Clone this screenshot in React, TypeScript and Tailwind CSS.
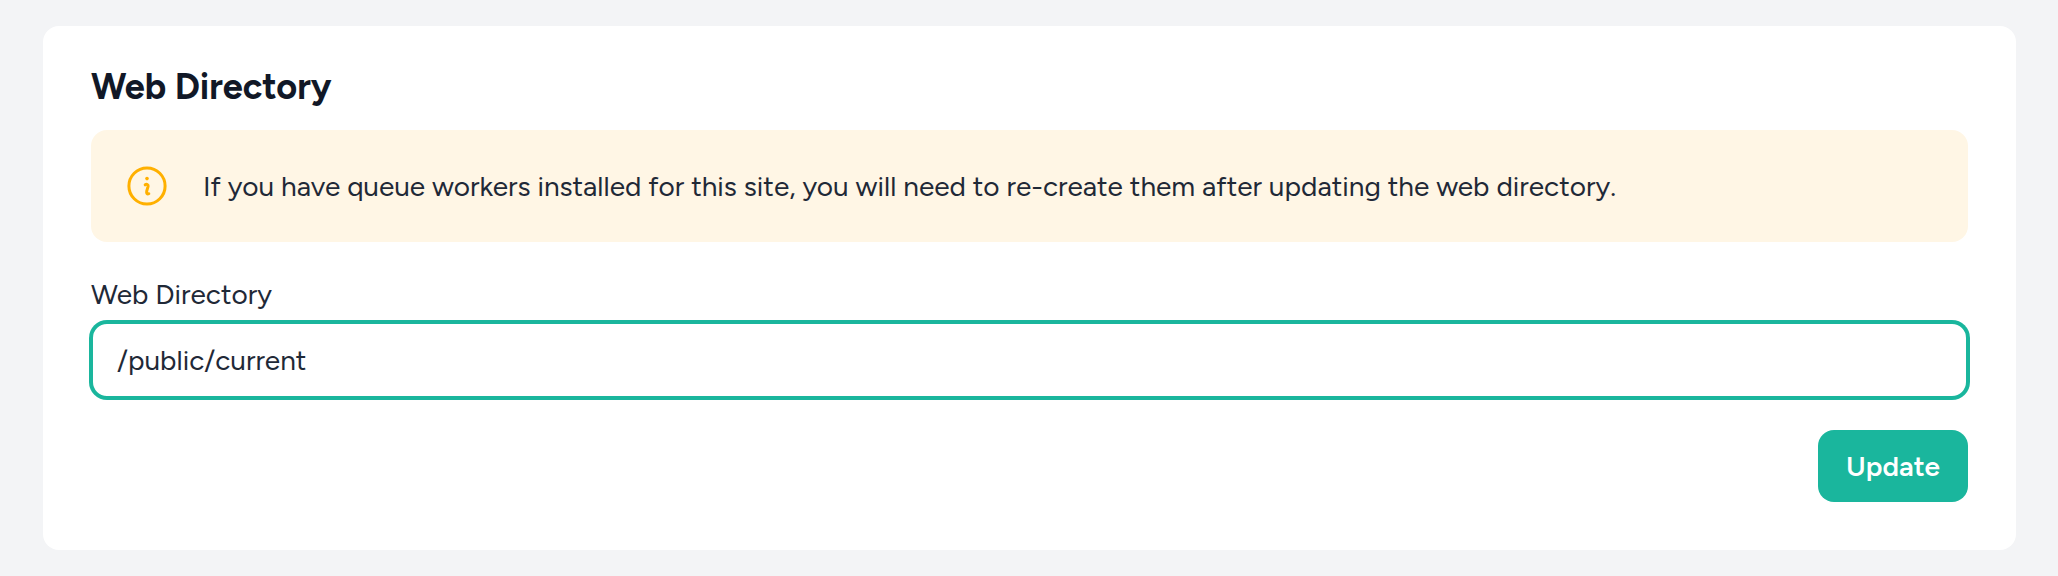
export default function App() {
  return (
    <div className="h-[576px] w-full bg-[#f3f4f6] pt-[26px] pr-[42px] pb-[26px] pl-[43px] font-['Figtree','Lato',sans-serif] text-[28px] text-[#1f2937]">
      <section className="flex h-[524px] flex-col rounded-[16px] bg-white px-12 pt-[39px]">
        <h2 className="h-[44px] text-[36px] leading-[44px] font-bold tracking-[-0.06px] whitespace-nowrap text-[#111827]">
          Web Directory
        </h2>
        <div className="mt-[21px] flex h-[112px] items-center rounded-[16px] bg-[#fff6e5] pl-[36px]">
          <svg className="h-[40px] w-[40px] shrink-0" viewBox="0 0 40 40" fill="none" stroke="#ffb000" strokeLinecap="round" strokeLinejoin="round">
            <circle cx="20" cy="20" r="18.1" strokeWidth="3" />
            <circle cx="20" cy="12.6" r="1.8" fill="#ffb000" stroke="none" />
            <path d="M18.2 18.8C19.7 17.8 21.5 18.6 21.1 20.4L19.7 25.2C19.3 27.2 20.2 28.4 21.8 27.7" strokeWidth="3" />
          </svg>
          <p className="ml-[36px] leading-[40px] whitespace-nowrap">
            If you have queue workers installed for this site, you will need to re-create them after updating the web directory.
          </p>
        </div>
        <label htmlFor="directory" className="mt-[32px] h-[40px] leading-[40px]">
          Web Directory
        </label>
        <input
          id="directory"
          defaultValue="/public/current"
          className="mt-2 h-[76px] w-full rounded-[16px] border-2 border-[#1ab69d] bg-white px-[24px] ring-2 ring-[#1ab69d] outline-none"
        />
        <button className="mt-8 flex h-[72px] w-[150px] items-center justify-center self-end rounded-[16px] bg-[#1ab69d] font-semibold text-white">
          Update
        </button>
      </section>
    </div>
  );
}
